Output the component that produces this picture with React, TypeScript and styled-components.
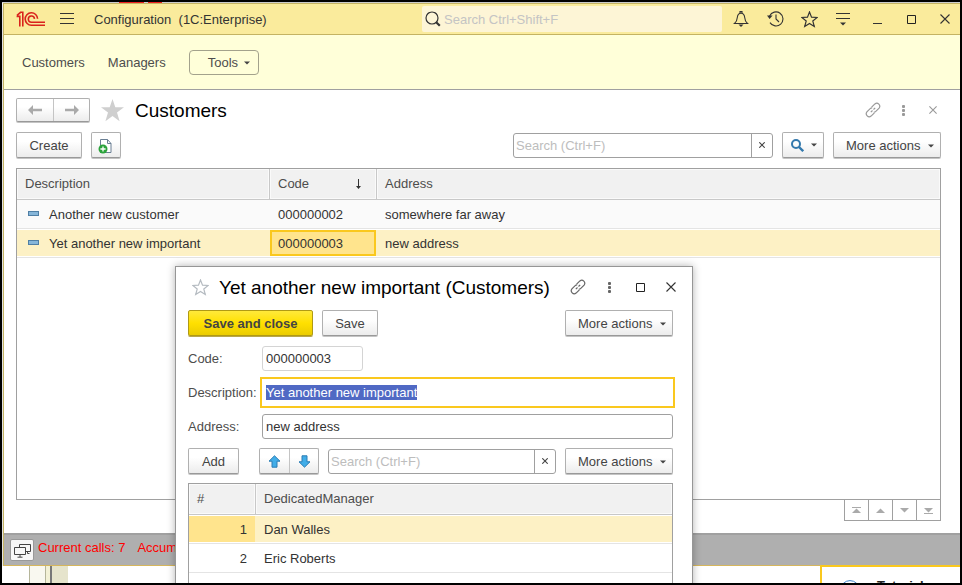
import React, { useEffect, useRef } from 'react';
import styled, { createGlobalStyle, css } from 'styled-components';

const GlobalStyle = createGlobalStyle`
  *, *::before, *::after { box-sizing: border-box; }
  body { margin: 0; font: 13px/16px "Liberation Sans", Arial, sans-serif; color: #333; background: #000; }
  button, input { font: inherit; color: inherit; }
  h1, h2 { margin: 0; font-weight: 400; color: #000; }
  svg { display: block; flex: none; }
`;

/* ---------- desktop and main window ---------- */

const Desktop = styled.div`
  position: relative;
  display: flex;
  flex-direction: column;
  height: 100vh;
  overflow: hidden;
  border: 2px solid #000;
  background: #fff;
`;

const TopSliver = styled.div`
  flex: none;
  height: 1px;
  background:
    linear-gradient(90deg, transparent 117px, #f22 117px 142px, transparent 142px 146px, #f22 146px 160px, transparent 160px),
    #dcdcdc;
`;

const AppWindow = styled.div`
  flex: 1;
  min-height: 0;
  display: flex;
  flex-direction: column;
  margin-left: 1px;
  border: 1px solid #c4b362;
  border-right: 0;
  border-bottom-color: #d6b65c;
  background: #fff;
  box-shadow: 0 2px 8px rgba(0, 0, 0, 0.25);
`;

const TitleBar = styled.header`
  flex: none;
  display: flex;
  align-items: center;
  height: 31px;
  padding: 0 3px 0 12px;
  background: #faeb9c;
  border-bottom: 1px solid #c4b362;
`;

const AppTitle = styled.div`
  flex: 1;
  padding-top: 2px;
  white-space: pre;
`;

const IconButton = styled.button<{ $tone?: string }>`
  display: grid;
  place-items: center;
  width: 24px;
  height: 24px;
  padding: 0;
  border: 0;
  background: none;
  color: ${(p) => p.$tone ?? '#333'};
`;

const MenuButton = styled(IconButton)`
  margin: 0 15px 0 9px;
`;

const GlobalSearch = styled.label`
  display: flex;
  align-items: center;
  gap: 3px;
  width: 300px;
  height: 26px;
  margin-right: 7px;
  padding-left: 3px;
  border-radius: 2px;
  background: #fdf5d6;
  input {
    flex: 1;
    min-width: 0;
    padding: 2px 0 0;
    border: 0;
    outline: 0;
    background: none;
  }
  input::placeholder { color: #c4c4c4; opacity: 1; }
`;

const WindowActions = styled.div`
  display: flex;
  gap: 10px;
`;

const SectionBar = styled.nav`
  flex: none;
  display: flex;
  align-items: center;
  gap: 23px;
  height: 55px;
  padding: 0 18px;
  background: #ffffd9;
  border-bottom: 1px solid #a0a0a0;
`;

const SectionLink = styled.a`
  padding-top: 2px;
  color: #4d4d4d;
  text-decoration: none;
`;

const ToolsButton = styled.button`
  display: flex;
  align-items: center;
  gap: 6px;
  height: 25px;
  padding: 2px 8px 0 18px;
  border: 1px solid #a3a28c;
  border-radius: 4px;
  background: none;
  color: #4d4d4d;
`;

const Page = styled.main`
  flex: 1;
  min-height: 0;
  display: flex;
  flex-direction: column;
  padding: 8px 19px 12px 12px;
`;

const PageHead = styled.div`
  display: flex;
  align-items: center;
  height: 24px;
  margin-bottom: 10px;
  gap: 11px;
`;

const PageTitle = styled.h1`
  flex: 1;
  padding-top: 2px;
  font-size: 19px;
  line-height: 24px;
`;

const HeadActions = styled.div`
  display: flex;
  gap: 6px;
  margin-right: -4px;
`;

/* ---------- buttons and inputs ---------- */

const raised = css`
  border: 1px solid #b0b0b0;
  border-bottom-color: #999;
  border-radius: 2px;
  background: linear-gradient(#fff 35%, #ececec);
  box-shadow: 0 1px 0 #c4c4c4;
`;

const Button = styled.button<{ $primary?: boolean; $width?: number }>`
  ${raised}
  display: flex;
  align-items: center;
  justify-content: center;
  flex: none;
  height: 26px;
  padding: 2px 0 0;
  width: ${(p) => (p.$width ? `${p.$width}px` : 'auto')};
  color: #444;
  ${(p) =>
    p.$primary &&
    css`
      font-weight: 700;
      border-color: #b09a14;
      background: linear-gradient(#ffe93b, #ffe000 50%, #ebcc00);
      box-shadow: 0 1px 0 #b8a64a;
    `}
`;

const MenuDropButton = styled(Button)`
  justify-content: space-between;
  padding: 2px 6px 0 12px;
`;

const FindButton = styled(MenuDropButton)`
  padding: 0 6px 0 8px;
`;

const ButtonPair = styled.div<{ $height: number; $cell: number }>`
  ${raised}
  display: flex;
  flex: none;
  height: ${(p) => p.$height}px;
  button {
    display: grid;
    place-items: center;
    width: ${(p) => p.$cell}px;
    padding: 0;
    border: 0;
    background: none;
    color: #aaa;
  }
  button + button { border-left: 1px solid #c4c4c4; }
`;

const SearchField = styled.div<{ $width?: number }>`
  display: flex;
  height: 25px;
  ${(p) => (p.$width ? `width: ${p.$width}px;` : 'flex: 1; min-width: 0;')}
  border: 1px solid #a0a0a0;
  border-radius: 3px;
  background: #fff;
  input {
    flex: 1;
    min-width: 0;
    padding: 2px 2px 0;
    border: 0;
    outline: 0;
    background: none;
  }
  input::placeholder { color: #bdbdbd; opacity: 1; }
  button {
    display: grid;
    place-items: center;
    width: 21px;
    padding: 0;
    border: 0;
    border-left: 1px solid #a0a0a0;
    background: none;
    color: #444;
  }
`;

const Toolbar = styled.div`
  display: flex;
  align-items: center;
  gap: 9px;
`;

const Spacer = styled.div`
  flex: 1;
`;

/* ---------- tables ---------- */

const TablePanel = styled.div<{ $gap: number }>`
  flex: 1;
  min-height: 0;
  margin-top: ${(p) => p.$gap}px;
  border: 1px solid #a0a0a0;
  background: #fff;
`;

const Table = styled.table`
  width: 100%;
  table-layout: fixed;
  border-collapse: separate;
  border-spacing: 0;
  th, td {
    padding: 0 8px;
    text-align: left;
    font-weight: 400;
    white-space: nowrap;
  }
  th {
    height: 31px;
    color: #4d4d4d;
    background: #f1f1f1;
    border-bottom: 1px solid #c8c8c8;
    box-shadow: inset 0 0 0 1px #fafafa;
  }
  th + th { border-left: 1px solid #c8c8c8; }
  td {
    height: 29px;
    padding-top: 2px;
    border-bottom: 1px solid #e4e4e4;
  }
  td + td { padding-left: 9px; }
`;

const Row = styled.tr<{ $selected?: boolean; $striped?: boolean }>`
  td {
    background: ${(p) => (p.$selected ? '#fdf1c5' : p.$striped ? '#fafafa' : '#fff')};
    ${(p) => p.$selected && 'box-shadow: inset 0 1px #fff, inset 0 -1px #fff;'}
  }
`;

const ActiveCell = styled.td`
  && {
    background: #ffe48d;
    box-shadow:
      inset 0 1px #fff, inset 0 -1px #fff, inset 1px 0 #fdf1c5,
      inset 0 3px #fac81e, inset 0 -3px #fac81e, inset 3px 0 #fac81e, inset -2px 0 #fac81e;
  }
`;

const NumberCell = styled.td<{ $active?: boolean }>`
  && {
    text-align: right;
    ${(p) => p.$active && 'background: #ffe48d;'}
  }
`;

const SortHeader = styled.div`
  display: flex;
  align-items: center;
  justify-content: space-between;
  padding-right: 6px;
`;

const ItemCell = styled.div`
  display: flex;
  align-items: center;
  gap: 10px;
  padding-left: 3px;
`;

const ItemMark = styled.span`
  width: 11px;
  height: 5px;
  margin-bottom: 3px;
  border: 1px solid #4f7fa5;
  background: #86b6d9;
`;

const Pager = styled.div`
  flex: none;
  display: flex;
  align-self: flex-end;
  height: 22px;
  margin-top: -1px;
  border: 1px solid #a0a0a0;
  button {
    display: grid;
    place-items: center;
    width: 24px;
    padding: 0;
    border: 0;
    background: none;
    color: #aaa;
  }
  button:first-child { width: 23px; }
  button + button { border-left: 1px solid #a0a0a0; }
`;

/* ---------- status bar and what shows below the window ---------- */

const StatusBar = styled.footer`
  flex: none;
  display: flex;
  align-items: center;
  gap: 4px;
  height: 32px;
  padding: 0 6px;
  background: #afafaf;
  border-top: 2px solid #a0a0a0;
  color: #f00;
`;

const StatusButton = styled.button`
  display: grid;
  place-items: center;
  width: 24px;
  height: 22px;
  padding: 0;
  border: 1px solid #999;
  border-radius: 2px;
  background: #f7f7f7;
  color: #444;
`;

const StatusText = styled.div`
  display: flex;
  gap: 12px;
  padding-bottom: 4px;
`;

const Backdrop = styled.div`
  flex: none;
  height: 17px;
  background:
    linear-gradient(90deg, transparent 27px, #b5b59a 27px 28px, #f9f8f0 28px 43px, #b5b59a 43px 44px, #f3f1d6 44px 48px, #777 48px 50px, #e6e4cc 50px 66px, transparent 66px),
    #fff;
`;

const Notification = styled.aside`
  position: absolute;
  right: 0;
  bottom: 0;
  display: flex;
  align-items: flex-start;
  gap: 17px;
  width: 140px;
  height: 18px;
  padding: 13px 0 0 18px;
  overflow: hidden;
  border: 2px solid #fac81e;
  border-width: 2px 0 0 2px;
  background: #fff;
  color: #222;
  line-height: 12px;
`;

/* ---------- record dialog ---------- */

const Dialog = styled.section`
  position: absolute;
  left: 173px;
  top: 264px;
  width: 518px;
  padding: 8px 19px 20px 12px;
  border: 1px solid #969696;
  background: #fff;
  box-shadow: 0 0 8px rgba(0, 0, 0, 0.3);
`;

const DialogHead = styled.div`
  display: flex;
  align-items: center;
  height: 24px;
  margin: 0 -10px 11px 0;
`;

const DialogTitle = styled.h2`
  flex: 1;
  margin-left: 7px;
  padding-top: 2px;
  font-size: 19px;
  line-height: 24px;
  white-space: nowrap;
`;

const DialogActions = styled.div`
  display: flex;
  gap: 7px;
`;

const Form = styled.form`
  display: grid;
  grid-template-columns: 74px 1fr;
  grid-auto-rows: 34px;
  align-items: center;
  margin: 5px 0;
  label { padding-top: 2px; color: #4d4d4d; }
`;

const TextInput = styled.input<{ $width?: number; $quiet?: boolean; $focused?: boolean }>`
  width: ${(p) => (p.$width ? `${p.$width}px` : '100%')};
  height: 25px;
  padding: 0 3px;
  border: 1px solid ${(p) => (p.$quiet ? '#d4d4d4' : '#a0a0a0')};
  border-radius: 3px;
  outline: 0;
  background: #fff;
  &::selection { background: #5069c4; color: #fff; }
  ${(p) =>
    p.$focused &&
    css`
      height: 27px;
      border-color: #fff;
      border-radius: 0;
      box-shadow: 0 0 0 2px #fac81e;
    `}
`;

const ArrowGroup = styled.div`
  margin-left: 11px;
`;

/* ---------- icons ---------- */

const Caret = () => (
  <svg width="6" height="4" viewBox="0 0 6 4"><path d="M0 .5h6L3 3.5z" fill="#444" /></svg>
);

const Logo = () => (
  <svg width="30" height="16" viewBox="0 0 30 16" fill="none" stroke="#d9231c" strokeWidth="1.6">
    <path d="M.6 5.400h3.200V15.500M1 4.400 4.600 1.300h2.200V15.500" />
    <path d="M21.600 7.800A6.200 6.200 0 1 0 15.500 14.200H29" />
    <path d="M18.500 7.800A3.100 3.100 0 1 0 15.500 11.200H29" />
  </svg>
);

const Burger = () => (
  <svg width="14" height="12" viewBox="0 0 14 12" stroke="#333"><path d="M0 .5h14M0 5.5h14M0 10.5h14" /></svg>
);

const SearchIcon = () => (
  <svg width="16" height="16" viewBox="0 0 16 16" fill="none" stroke="#333">
    <circle cx="7" cy="7" r="6" strokeWidth="1.2" />
    <path d="m11.2 11.2 3.6 3.6" strokeWidth="2.2" />
  </svg>
);

const Bell = () => (
  <svg width="16" height="16" viewBox="0 0 16 16" fill="none" stroke="#333" strokeWidth="1.1">
    <path d="M1.5 12.5h13c-2-1.6-2.6-3-2.8-6C11.5 4 10 2.2 8 2.2S4.500 4 4.300 6.500c-.2 3-.8 4.400-2.800 6z" />
    <path d="M7 2V.6h2V2" />
    <path d="M5.500 13.500h5L8 16z" fill="#333" stroke="none" />
  </svg>
);

const History = () => (
  <svg width="17" height="16" viewBox="0 0 17 16" fill="none" stroke="#333" strokeWidth="1.1">
    <path d="M2.600 5A7 7 0 1 1 3 11.600" />
    <path d="M9 3.500V8l3 3" />
    <path d="M0 4.500h5.600L2.600 8z" fill="#333" stroke="none" />
  </svg>
);

const StarIcon = ({ size, fill = 'none', stroke = '#333' }: { size: number; fill?: string; stroke?: string }) => (
  <svg width={size} height={size} viewBox="0 0 16 16" fill={fill} stroke={stroke} strokeWidth="1.1">
    <path d="m8 .9 1.900 4.900 5.300.3-4.100 3.300 1.400 5.200L8 11.700l-4.500 2.900 1.400-5.200L.8 6.100l5.300-.3z" />
  </svg>
);

const SolidStar = () => (
  <svg width="23" height="23" viewBox="0 0 23 23" fill="#cfcfcf">
    <path d="m11.500 0 2.800 8.300H23l-7 5.200 2.600 8.800-7.100-5.300-7.100 5.300L7 13.500 0 8.300h8.700z" />
  </svg>
);

const FunctionsMenu = () => (
  <svg width="14" height="13" viewBox="0 0 14 13"><path d="M0 .5h14M0 5.500h14" stroke="#333" /><path d="M4 9.500h6L7 12.500z" fill="#333" /></svg>
);

const Minimize = () => (
  <svg width="9" height="10" viewBox="0 0 9 10"><path d="M0 9.500h9" stroke="#333" /></svg>
);

const Maximize = () => (
  <svg width="9" height="9" viewBox="0 0 9 9"><path d="M.5.5h8v8h-8z" fill="none" stroke="#222" /></svg>
);

const Cross = ({ size }: { size: number }) => (
  <svg width={size} height={size} viewBox="0 0 10 10" stroke="currentColor" fill="none" strokeWidth={11 / size}>
    <path d="m.5.5 9 9M9.500.5l-9 9" />
  </svg>
);

const LinkIcon = () => (
  <svg width="16" height="16" viewBox="0 0 16 16" fill="none" stroke="currentColor" strokeWidth="1.2">
    <path d="m6.600 5.200 3.300-3.300a3 3 0 0 1 4.200 4.200l-3.300 3.300a2.500 2.500 0 0 1-2 .7" />
    <path d="m9.400 10.800-3.300 3.300a3 3 0 0 1-4.200-4.200l3.300-3.300a2.500 2.500 0 0 1 2-.7" />
    <path d="m5.800 10.200 1.700-1.700M8.500 7.500l1.700-1.700" />
  </svg>
);

const Dots = () => (
  <svg width="3" height="11" viewBox="0 0 3 11" fill="currentColor">
    <rect width="3" height="3" rx="1" /><rect y="4" width="3" height="3" rx="1" /><rect y="8" width="3" height="3" rx="1" />
  </svg>
);

const Arrow = ({ flip }: { flip?: boolean }) => (
  <svg width="14" height="10" viewBox="0 0 14 10" fill="currentColor">
    <path d={flip ? 'M14 5 9 0v3.800H0v2.400h9V10z' : 'M0 5l5-5v3.800h9v2.400H5V10z'} />
  </svg>
);

const CopyIcon = () => (
  <svg width="16" height="16" viewBox="0 0 16 16" fill="none">
    <path d="M2.500 1.500h7l3.500 4v9H2.500z" fill="#fff" stroke="#6a7f94" />
    <path d="M9.500 1.500v4H13" stroke="#6a7f94" />
    <circle cx="5" cy="11" r="4.500" fill="#2ba33b" />
    <path d="M5 8.400v5.200M2.400 11h5.200" stroke="#fff" strokeWidth="1.300" />
  </svg>
);

const FindIcon = () => (
  <svg width="13" height="13" viewBox="0 0 13 13" fill="none" stroke="#3379ad">
    <circle cx="5" cy="5" r="4" strokeWidth="2" />
    <path d="m8 8 4.200 4.200" strokeWidth="2.400" />
  </svg>
);

const SortArrow = () => (
  <svg width="7" height="10" viewBox="0 0 7 10" fill="#333"><path d="M3 0h1v7h2l-2.500 3L1 7h2z" /></svg>
);

const BlueArrow = ({ down }: { down?: boolean }) => (
  <svg width="13" height="13" viewBox="0 0 13 13" fill="#41ade8" stroke="#2c7db4">
    <path d={down ? 'M6.500 12.200 1 6.800h3V.8h5v6h3z' : 'M6.500.8 1 6.200h3v6h5v-6h3z'} />
  </svg>
);

const PagerIcon = ({ down, bar }: { down?: boolean; bar?: boolean }) => (
  <svg width="9" height="7" viewBox="0 0 9 7" fill="currentColor">
    <path d={down ? 'M0 1h9L4.500 5.500z' : 'M0 6h9L4.500 1.500z'} />
    {bar && <path d={down ? 'M0 6h9v1H0z' : 'M0 0h9v1H0z'} />}
  </svg>
);

const Screens = () => (
  <svg width="17" height="15" viewBox="0 0 17 15" fill="none" stroke="#444">
    <path d="M5.500 4V1.500H16.500v7H12M13.500 8.500v2h2" />
    <path d="M.5 4.500h11v7H.5zM6 11.500V14M3.500 14.200h5" fill="#f7f7f7" />
  </svg>
);

const InfoRing = () => (
  <svg width="20" height="20" viewBox="0 0 20 20" fill="none" stroke="#3c82c8"><circle cx="10" cy="10" r="9.400" /></svg>
);

/* ---------- screen ---------- */

const customers = [
  { name: 'Another new customer', code: '000000002', address: 'somewhere far away' },
  { name: 'Yet another new important', code: '000000003', address: 'new address', selected: true },
];

const managers = ['Dan Walles', 'Eric Roberts', ''];

const titleActions = [
  { label: 'Notifications', icon: <Bell /> },
  { label: 'History', icon: <History /> },
  { label: 'Favorites', icon: <StarIcon size={17} /> },
  { label: 'Service functions', icon: <FunctionsMenu /> },
  { label: 'Minimize', icon: <Minimize /> },
  { label: 'Maximize', icon: <Maximize /> },
  { label: 'Close', icon: <Cross size={10} /> },
];

function ListSearch({ label, width }: { label: string; width?: number }) {
  return (
    <SearchField $width={width}>
      <input type="text" aria-label={label} placeholder="Search (Ctrl+F)" />
      <button type="button" aria-label="Clear search"><Cross size={6} /></button>
    </SearchField>
  );
}

function MoreActions() {
  return <MenuDropButton type="button" $width={108}>More actions <Caret /></MenuDropButton>;
}

function CustomerTable() {
  return (
    <TablePanel $gap={10}>
      <Table>
        <colgroup><col width="252" /><col width="107" /><col /></colgroup>
        <thead>
          <tr>
            <th>Description</th>
            <th><SortHeader>Code <SortArrow /></SortHeader></th>
            <th>Address</th>
          </tr>
        </thead>
        <tbody>
          {customers.map((c) => (
            <Row key={c.code} $selected={c.selected} $striped>
              <td><ItemCell><ItemMark />{c.name}</ItemCell></td>
              {c.selected ? <ActiveCell>{c.code}</ActiveCell> : <td>{c.code}</td>}
              <td>{c.address}</td>
            </Row>
          ))}
        </tbody>
      </Table>
    </TablePanel>
  );
}

function CustomerDialog() {
  const description = useRef<HTMLInputElement>(null);
  useEffect(() => {
    description.current?.focus({ preventScroll: true });
    description.current?.select();
  }, []);

  return (
    <Dialog role="dialog" aria-labelledby="dialog-title">
      <DialogHead>
        <IconButton aria-label="Add to favorites"><StarIcon size={17} stroke="#b4bac0" /></IconButton>
        <DialogTitle id="dialog-title">Yet another new important (Customers)</DialogTitle>
        <DialogActions>
          <IconButton aria-label="Get link" $tone="#666"><LinkIcon /></IconButton>
          <IconButton aria-label="More" $tone="#666"><Dots /></IconButton>
          <IconButton aria-label="Maximize"><Maximize /></IconButton>
          <IconButton aria-label="Close"><Cross size={10} /></IconButton>
        </DialogActions>
      </DialogHead>
      <Toolbar>
        <Button type="button" $primary $width={125}>Save and close</Button>
        <Button type="button" $width={56}>Save</Button>
        <Spacer />
        <MoreActions />
      </Toolbar>
      <Form>
        <label htmlFor="code">Code:</label>
        <TextInput id="code" defaultValue="000000003" $width={101} $quiet />
        <label htmlFor="description">Description:</label>
        <TextInput id="description" ref={description} defaultValue="Yet another new important" $focused />
        <label htmlFor="address">Address:</label>
        <TextInput id="address" defaultValue="new address" />
      </Form>
      <Toolbar>
        <Button type="button" $width={51}>Add</Button>
        <ArrowGroup>
          <ButtonPair $height={26} $cell={29}>
            <button type="button" aria-label="Move up"><BlueArrow /></button>
            <button type="button" aria-label="Move down"><BlueArrow down /></button>
          </ButtonPair>
        </ArrowGroup>
        <ListSearch label="Search managers" />
        <MoreActions />
      </Toolbar>
      <TablePanel $gap={9}>
        <Table>
          <colgroup><col width="66" /><col /></colgroup>
          <thead><tr><th>#</th><th>DedicatedManager</th></tr></thead>
          <tbody>
            {managers.map((name, i) => (
              <Row key={i} $selected={i === 0}>
                <NumberCell $active={i === 0}>{name && i + 1}</NumberCell>
                <td>{name}</td>
              </Row>
            ))}
          </tbody>
        </Table>
      </TablePanel>
    </Dialog>
  );
}

export default function App() {
  return (
    <Desktop>
      <GlobalStyle />
      <TopSliver />
      <AppWindow>
        <TitleBar>
          <Logo />
          <MenuButton aria-label="Main menu"><Burger /></MenuButton>
          <AppTitle>Configuration  (1C:Enterprise)</AppTitle>
          <GlobalSearch>
            <SearchIcon />
            <input type="search" aria-label="Search" placeholder="Search Ctrl+Shift+F" />
          </GlobalSearch>
          <WindowActions>
            {titleActions.map((a) => (
              <IconButton key={a.label} aria-label={a.label}>{a.icon}</IconButton>
            ))}
          </WindowActions>
        </TitleBar>
        <SectionBar>
          <SectionLink href="#customers">Customers</SectionLink>
          <SectionLink href="#managers">Managers</SectionLink>
          <ToolsButton>Tools <Caret /></ToolsButton>
        </SectionBar>
        <Page>
          <PageHead>
            <ButtonPair $height={24} $cell={36}>
              <button type="button" aria-label="Back"><Arrow /></button>
              <button type="button" aria-label="Forward"><Arrow flip /></button>
            </ButtonPair>
            <SolidStar />
            <PageTitle>Customers</PageTitle>
            <HeadActions>
              <IconButton aria-label="Get link" $tone="#999"><LinkIcon /></IconButton>
              <IconButton aria-label="More" $tone="#999"><Dots /></IconButton>
              <IconButton aria-label="Close" $tone="#999"><Cross size={8} /></IconButton>
            </HeadActions>
          </PageHead>
          <Toolbar>
            <Button type="button" $width={66}>Create</Button>
            <Button type="button" $width={30} aria-label="Create by copying"><CopyIcon /></Button>
            <Spacer />
            <ListSearch label="Search customers" width={260} />
            <FindButton type="button" $width={42} aria-label="Find"><FindIcon /><Caret /></FindButton>
            <MoreActions />
          </Toolbar>
          <CustomerTable />
          <Pager>
            <button type="button" aria-label="First"><PagerIcon bar /></button>
            <button type="button" aria-label="Previous"><PagerIcon /></button>
            <button type="button" aria-label="Next"><PagerIcon down /></button>
            <button type="button" aria-label="Last"><PagerIcon down bar /></button>
          </Pager>
        </Page>
        <StatusBar>
          <StatusButton aria-label="Windows"><Screens /></StatusButton>
          <StatusText><span>Current calls: 7</span><span>Accumulated</span></StatusText>
        </StatusBar>
      </AppWindow>
      <Backdrop />
      <Notification><InfoRing /><b>Tutorial</b></Notification>
      <CustomerDialog />
    </Desktop>
  );
}
